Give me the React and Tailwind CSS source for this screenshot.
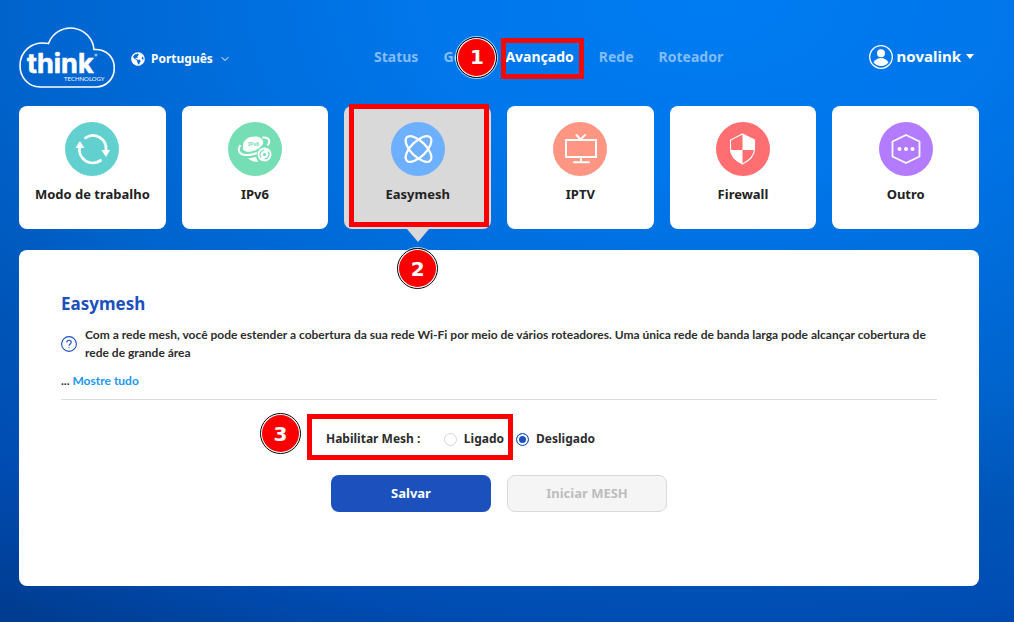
import React, { useState } from "react";
import { FaGlobeAmericas } from "react-icons/fa";
import { ChevronDown } from "lucide-react";

const navItems = ["Status", "Geral", "Avançado", "Rede", "Roteador"];

const WorkModeIcon = () => (
  <svg viewBox="0 0 54 54" className="h-full w-full" fill="none" stroke="#fff" strokeWidth="2.8">
    <path d="M20.500 15.800A13.200 13.200 0 0 1 41 28" strokeLinecap="round" />
    <path d="M35.500 38.500A13.400 13.400 0 0 1 14.600 25" strokeLinecap="round" />
    <path d="M36.500 28h8.500l-4 7zM10.500 26h9l-4.600-7z" fill="#fff" stroke="none" />
  </svg>
);

const Ipv6Icon = () => (
  <svg viewBox="0 0 54 54" className="h-full w-full">
    <path d="M15 27C14 18 20 14.500 27 14.500C33 14.500 36 18 35 21.500C33 27 23 31 18 29.500C16 29 15.200 28 15 27Z" fill="#fff" />
    <path d="M12.500 23C9 28 11 32.500 18 33C23 33.300 27 32 30 30.500" fill="none" stroke="#fff" strokeWidth="2" />
    <path d="M34.500 15.500C41 15 43 18.500 39.500 23.500" fill="none" stroke="#fff" strokeWidth="2" />
    <path d="M20 36.500L28 35L30 40C26 40 23 39 20 36.500Z" fill="#fff" />
    <circle cx="36.500" cy="32.500" r="8" fill="#76deb4" />
    <circle cx="36.500" cy="32.500" r="7" fill="#fff" />
    <path d="M33 35.500A4.600 4.600 0 0 1 36.500 28M40 29.500A4.600 4.600 0 0 1 36.500 37" fill="none" stroke="#76deb4" strokeWidth="1.200" />
    <circle cx="36.500" cy="32.500" r="1.600" fill="#76deb4" />
    <text x="25.500" y="24" textAnchor="middle" fontSize="5" fontWeight="700" fill="#76deb4">IPv6</text>
  </svg>
);

const MeshIcon = () => (
  <svg viewBox="0 0 54 54" className="h-full w-full" fill="none" stroke="#fff" strokeWidth="2.200">
    <ellipse cx="27.500" cy="27" rx="16.500" ry="7.600" transform="rotate(45 27.500 27)" />
    <ellipse cx="27.500" cy="27" rx="16.500" ry="7.600" transform="rotate(-45 27.500 27)" />
  </svg>
);

const TvIcon = () => (
  <svg viewBox="0 0 54 54" className="h-full w-full" fill="none" stroke="#fff" strokeWidth="2">
    <rect x="13" y="18" width="30" height="17" />
    <path d="M28 35v5M21 40.300h15M23.500 13l4 4.500l4.500-4.500" strokeLinecap="round" />
  </svg>
);

const FirewallIcon = () => (
  <svg viewBox="0 0 54 54" className="h-full w-full">
    <path d="M26.500 12L38.500 17.500V28H26.500V42C19 38 14.500 33.500 14.500 28H26.500Z" fill="#fff" />
    <path d="M26.500 12L38.500 18V27C38.500 33.500 33.500 38.500 26.500 42C19.500 38.500 14.500 33.500 14.500 27V18Z" fill="none" stroke="#fff" strokeWidth="1.200" />
  </svg>
);

const OtherIcon = () => (
  <svg viewBox="0 0 54 54" className="h-full w-full" fill="#fff">
    <path d="M27 13L40.500 19.500V34.500L27 41L13.500 34.500V19.500Z" fill="none" stroke="#fff" strokeWidth="1.800" strokeLinejoin="round" />
    <circle cx="20.500" cy="27" r="2" />
    <circle cx="27" cy="27" r="2" />
    <circle cx="33.500" cy="27" r="2" />
  </svg>
);

const cards = [
  { label: "Modo de trabalho", color: "bg-[#62d0cf]", icon: WorkModeIcon },
  { label: "IPv6", color: "bg-[#76deb4]", icon: Ipv6Icon },
  { label: "Easymesh", color: "bg-[#6cb0ff]", icon: MeshIcon, active: true },
  { label: "IPTV", color: "bg-[#ff9683]", icon: TvIcon },
  { label: "Firewall", color: "bg-[#ff6e70]", icon: FirewallIcon },
  { label: "Outro", color: "bg-[#b37bff]", icon: OtherIcon },
];

const Logo = () => (
  <svg viewBox="0 0 96 62" className="h-[62px] w-24" role="img" aria-label="think technology">
    <path
      d="M21 61C9 61 1 51 1 39.500C1 26 12 14.500 29.500 17.500A23.500 23.500 0 0 1 75 23.500C88 23 95.300 31.500 95.300 42C95.300 53 87 61 77 61Z"
      fill="none"
      stroke="#fff"
      strokeWidth="1.600"
    />
    <text x="8" y="47" fontFamily="Inter, sans-serif" fontSize="27" fontWeight="700" fill="#fff" stroke="#fff" strokeWidth="0.600" strokeLinejoin="round">think</text>
    <text x="45" y="54.500" fontFamily="Lato, sans-serif" fontSize="6" fill="#fff">TECHNOLOGY</text>
    <circle cx="77" cy="29" r="1.500" fill="#8fc0f5" />
  </svg>
);

// Numbered step marker
const Step = ({ n, className }) => (
  <span className={`absolute z-10 size-[43px] rounded-full border border-white/70 ${className}`}>
    <span className="flex size-full rounded-full border border-black bg-white p-px">
      <span className="flex size-full items-center justify-center rounded-full bg-[#fb0000] font-['DejaVu_Sans'] text-xl font-bold text-white">
        {n}
      </span>
    </span>
  </span>
);

const Header = () => (
  <header className="flex h-[106px] items-center pt-[7px] text-white">
    <div className="flex w-[355px] items-center gap-4">
      <Logo />
      <button className="flex items-center gap-[6px] pt-1 text-xs font-bold">
        <FaGlobeAmericas className="size-[14px]" />
        Português
        <ChevronDown className="size-3" strokeWidth={2} />
      </button>
    </div>
    <nav className="flex gap-[25px] text-sm font-bold">
      {navItems.map((item) => (
        <a key={item} href="#" className={item === "Avançado" ? "relative" : "relative text-[#82bdf9]"}>
          {item}
          {item === "Avançado" && (
            <>
              <span className="absolute -top-[9px] -left-1 h-[41px] w-[83px] border-[5px] border-[#f00a0a]" />
              <Step n={1} className="-top-[11px] -left-[50px]" />
            </>
          )}
        </a>
      ))}
    </nav>
    <button className="ml-auto flex items-center gap-1 pr-1 text-[15px] font-bold">
      <svg viewBox="0 0 24 24" className="size-6" fill="#fff">
        <circle cx="12" cy="12" r="11.300" fill="none" stroke="#fff" strokeWidth="1.300" />
        <circle cx="12" cy="8.300" r="4" />
        <path d="M4.500 17.500C6 14.500 9 13 12 13s6 1.500 7.500 4.500C17.500 20 15 21 12 21s-5.500-1-7.500-3.500Z" />
      </svg>
      novalink
      <svg viewBox="0 0 10 5" className="h-[5px] w-[10px]" fill="#fff">
        <path d="M1 0h8L5 5z" />
      </svg>
    </button>
  </header>
);

const Card = ({ card }) => {
  const Icon = card.icon;
  return (
    <button
      className={`relative flex h-[123px] flex-col items-center gap-2 rounded-lg pt-4 text-[13px] font-bold text-[#222] ${card.active ? "bg-[#d9d9d9]" : "bg-white"}`}
    >
      <span className={`size-[54px] rounded-full ${card.color}`}>
        <Icon />
      </span>
      <span className="leading-5">{card.label}</span>
      {card.active && (
        <>
          <svg viewBox="0 0 22 13" className="absolute top-full h-[13px] w-[22px]" fill="#d9d9d9">
            <path d="M0 0h22L11 13z" />
          </svg>
          <span className="absolute -top-0.5 right-0.5 bottom-0.5 left-[5px] border-[5px] border-[#fb0000]" />
          <Step n={2} className="top-[141px]" />
        </>
      )}
    </button>
  );
};

const Radio = ({ label, ...props }) => (
  <label className="flex items-center gap-[7px]">
    <input
      type="radio"
      name="mesh"
      className="size-[13px] appearance-none rounded-full border border-[#d5d5d5] bg-white checked:border-[#1c50bd] checked:bg-[#1c50bd] checked:shadow-[inset_0_0_0_2px_#fff]"
      {...props}
    />
    {label}
  </label>
);

const MeshPanel = () => {
  const [mesh, setMesh] = useState("off");

  return (
    <main className="mt-[21px] min-h-[336px] rounded-lg bg-white px-[42px] pt-10 pb-[74px] text-[#2d2d2d]">
      <h1 className="text-[17px] leading-7 font-bold text-[#1c50bd]">Easymesh</h1>
      <div className="mt-2 flex items-center gap-2 font-['Lato',sans-serif] text-xs leading-[18px] font-bold">
        <svg viewBox="0 0 16 16" className="size-4 shrink-0" fill="none" stroke="#1c50bd">
          <circle cx="8" cy="8" r="7.400" strokeWidth="1.100" />
          <path d="M5.800 6.500C5.800 3.500 10.300 3.500 10.300 6.300C10.300 8 8 8 8 9.800M8 11.200v1" strokeWidth="1.100" />
        </svg>
        <p>
          Com a rede mesh, você pode estender a cobertura da sua rede Wi-Fi por meio de vários roteadores. Uma única
          rede de banda larga pode alcançar cobertura de rede de grande área
        </p>
      </div>
      <p className="mt-2.5 border-b border-[#dcdcdc] pb-[9px] font-['Lato',sans-serif] text-xs leading-[18px] font-bold">
        ... <a href="#" className="text-[#2196f3]">Mostre tudo</a>
      </p>

      <div className="mx-auto mt-[29px] w-[346px] text-xs leading-5 font-bold">
        <div role="radiogroup" aria-label="Habilitar Mesh" className="flex items-center gap-3">
          <div className="relative flex w-[178px] items-center justify-between">
            <span>Habilitar Mesh :</span>
            <Radio label="Ligado" checked={mesh === "on"} onChange={() => setMesh("on")} />
            <span className="pointer-events-none absolute -top-[15px] -left-[19px] h-[46px] w-[206px] border-[5px] border-[#fb0000]" />
            <Step n={3} className="-top-[17px] -left-[67px]" />
          </div>
          <Radio label="Desligado" checked={mesh === "off"} onChange={() => setMesh("off")} />
        </div>
      </div>

      <div className="mt-[26px] flex justify-center gap-4 text-[13px] font-bold">
        <button className="h-[37px] w-40 rounded-lg bg-[#1c50bd] text-white">Salvar</button>
        <button disabled className="h-[37px] w-40 rounded-lg border border-[#d9d9d9] bg-[#f5f5f5] text-[#bdbdbd]">
          Iniciar MESH
        </button>
      </div>
    </main>
  );
};

const App = () => {
  return (
    <div className="min-h-screen bg-[radial-gradient(ellipse_120%_120%_at_70%_0%,#007cf2_0%,#0076ea_25%,#0063cc_58%,#0055b8_71%,#004cb2_85%,#003c90_100%)] pr-[35px] pb-9 pl-[19px] font-['Noto_Sans',sans-serif]">
      <Header />
      <div className="grid grid-cols-6 gap-4">
        {cards.map((card) => (
          <Card key={card.label} card={card} />
        ))}
      </div>
      <MeshPanel />
    </div>
  );
};

export default App;
